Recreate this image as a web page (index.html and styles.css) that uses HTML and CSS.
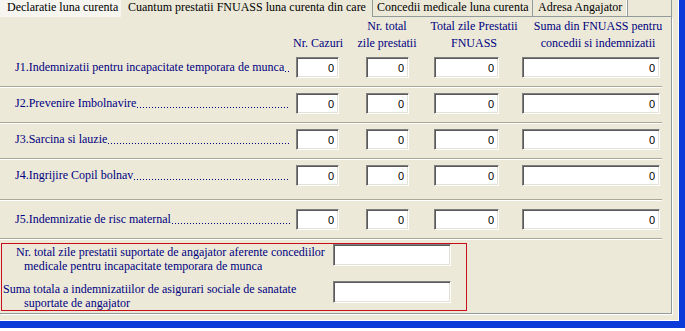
FILE: index.html
```html
<!DOCTYPE html>
<html lang="ro">
<head>
<meta charset="UTF-8">
<title>Cuantum prestatii FNUASS</title>
<link rel="stylesheet" href="styles.css">
</head>
<body>
<div class="window">
  <div class="tabs">
    <div class="tab tab_hot">Declaratie luna curenta</div>
    <div class="tab tab_on">Cuantum prestatii FNUASS luna curenta din care</div>
    <div class="tab tab_3">Concedii medicale luna curenta</div>
    <div class="tab tab_4">Adresa Angajator</div>
    <div class="tab_rest"></div>
  </div>
  <div class="panel">
    <div class="head">
      <div class="hcell h1">Nr. Cazuri</div>
      <div class="hcell h2">Nr. total<br>zile prestatii</div>
      <div class="hcell h3">Total zile Prestatii<br>FNUASS</div>
      <div class="hcell h4">Suma din FNUASS pentru<br>concedii si indemnizatii</div>
    </div>

    <div class="row">
      <div class="lbl"><span>J1.Indemnizatii pentru incapacitate temporara de munca</span><span class="dots"></span></div>
      <input class="fld w1" type="text" value="0">
      <input class="fld w2" type="text" value="0">
      <input class="fld w3" type="text" value="0">
      <input class="fld w4" type="text" value="0">
    </div>
    <div class="row">
      <div class="lbl"><span>J2.Prevenire Imbolnavire</span><span class="dots"></span></div>
      <input class="fld w1" type="text" value="0">
      <input class="fld w2" type="text" value="0">
      <input class="fld w3" type="text" value="0">
      <input class="fld w4" type="text" value="0">
    </div>
    <div class="row">
      <div class="lbl"><span>J3.Sarcina si lauzie</span><span class="dots"></span></div>
      <input class="fld w1" type="text" value="0">
      <input class="fld w2" type="text" value="0">
      <input class="fld w3" type="text" value="0">
      <input class="fld w4" type="text" value="0">
    </div>
    <div class="row row_wide">
      <div class="lbl"><span>J4.Ingrijire Copil bolnav</span><span class="dots"></span></div>
      <input class="fld w1" type="text" value="0">
      <input class="fld w2" type="text" value="0">
      <input class="fld w3" type="text" value="0">
      <input class="fld w4" type="text" value="0">
    </div>
    <div class="row row_last">
      <div class="lbl"><span>J5.Indemnizatie de risc maternal</span><span class="dots"></span></div>
      <input class="fld w1" type="text" value="0">
      <input class="fld w2" type="text" value="0">
      <input class="fld w3" type="text" value="0">
      <input class="fld w4" type="text" value="0">
    </div>

    <div class="angajator">
      <div class="ang_row ang_a">
        <div class="ang_txt">
          <div class="l1">Nr. total zile prestatii suportate de angajator aferente concediilor</div>
          <div class="l2">medicale pentru incapacitate temporara de munca</div>
        </div>
        <input class="fld fld_big" type="text" value="">
      </div>
      <div class="ang_row ang_b">
        <div class="ang_txt">
          <div class="l1 l1_flush">Suma totala a indemnizatiilor de asigurari sociale de sanatate</div>
          <div class="l2">suportate de angajator</div>
        </div>
        <input class="fld fld_big" type="text" value="">
      </div>
    </div>
  </div>
</div>
</body>
</html>
```

FILE: styles.css
```css
html,body{ margin:0; padding:0; background:#fff;}
body{ font-family:"Liberation Serif","Times New Roman",serif; font-size:12px; color:#000;}
.window{ width:679px; height:321px; background:#ece9d8; border-right:6px solid #0b3bd8; border-bottom:7px solid #0b3bd8; box-shadow:inset -1px -1px 0 #fff; overflow:hidden;}

/* tabs */
.tabs{ display:flex; height:17px; width:672px;}
.tab{ height:17px; line-height:14px; white-space:nowrap; box-sizing:border-box;}
.tab_hot{ width:121px; padding-left:7px; background:#f6f5f0;}
.tab_on{ width:251px; padding-left:7px;}
.tab_3{ width:160px; padding-left:4px; border-left:1px solid #919b9c; border-bottom:1px solid #919b9c;}
.tab_4{ width:96px; padding-left:5px; border-left:1px solid #919b9c; border-right:1px solid #919b9c; border-bottom:1px solid #919b9c; box-shadow:inset -1px 0 0 #fff;}
.tab_rest{ flex:1; border-bottom:1px solid #919b9c; border-right:1px solid #919b9c;}

.panel{ width:672px; height:297px; box-sizing:border-box; border-right:1px solid #919b9c; border-bottom:1px solid #919b9c; box-shadow:1px 1px 0 #fff;}

/* column header */
.head{ display:flex; align-items:flex-end; height:35px; padding-left:285px; color:#000080; line-height:17px;}
.hcell{ text-align:center; white-space:nowrap;}
.h1{ width:66px;}
.h2{ width:72px;}
.h3{ width:102px;}
.h4{ width:146px;}

/* rows */
.row{ display:grid; grid-template-columns:281px 70px 68px 88px 138px; align-items:start; width:662px; box-sizing:border-box; padding:0 0 8px 15px; margin-top:5px; border-bottom:1px solid #aca899; box-shadow:0 1px 0 #fff;}
.row + .row{ margin-top:6px;}
.row_wide{ padding-bottom:13px;}
.row_last{ margin-top:9px !important;}
.lbl{ display:flex; height:21px; align-items:center; width:275px; white-space:nowrap; color:#000080;}
.lbl .dots{ flex:1; align-self:stretch; background:linear-gradient(90deg,#000080 1px,transparent 1px) 1px 14px / 3px 1px repeat-x;}

.fld{ box-sizing:border-box; height:21px; margin:0; padding:0 4px 0 2px; border:1px solid; border-color:#7f7f7f #fff #fff #7f7f7f; box-shadow:inset 1px 1px 0 #5a5a5a, inset -1px -1px 0 #e4e2d6; background:#fff; text-align:right; font-family:"Liberation Sans",Arial,sans-serif; font-size:11px; color:#000; outline:none;}
.w1{ width:43px;}
.w2{ width:43px;}
.w3{ width:65px;}
.w4{ width:138px;}

/* angajator box */
.angajator{ width:466px; height:68px; margin:4px 0 0 1px; box-sizing:border-box; border:1px solid #c8101c;}
.ang_row{ display:grid; grid-template-columns:331px 118px; align-items:start;}
.ang_a{ height:37px;}
.ang_b{ height:29px;}
.ang_txt{ padding-top:1px; line-height:14px; color:#000080; white-space:nowrap;}
.ang_txt .l1{ padding-left:14px;}
.ang_txt .l1_flush{ padding-left:1px;}
.ang_txt .l2{ padding-left:22px;}
.fld_big{ width:118px; height:22px;}
```
